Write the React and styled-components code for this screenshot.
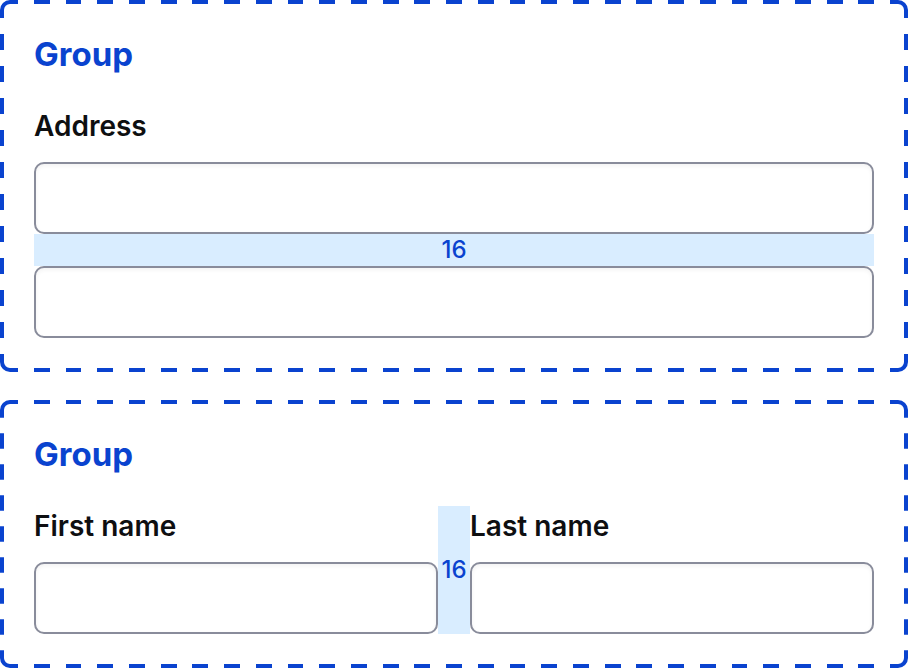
import React from "react";
import styled, { createGlobalStyle } from "styled-components";

const blue = "#0a43cf";

// One dashed tile per edge, with a rounded piece for each corner.
const dashedFrame = encodeURIComponent(
  `<svg xmlns="http://www.w3.org/2000/svg" width="52" height="52" viewBox="0 0 52 52" fill="none" stroke="${blue}" stroke-width="4">` +
    `<path d="M2 18V10A8 8 0 0 1 10 2H18M34 2H42A8 8 0 0 1 50 10V18M50 34V42A8 8 0 0 1 42 50H34M18 50H10A8 8 0 0 1 2 42V34"/>` +
    `</svg>`
);

const GlobalStyle = createGlobalStyle`
  *, *::before, *::after {
    box-sizing: border-box;
  }

  body {
    margin: 0;
    background: #ffffff;
    color: #0e0f11;
    font-family: Inter, "Liberation Sans", sans-serif;
  }
`;

const Page = styled.main`
  display: grid;
  gap: 28px;
`;

const Group = styled.section`
  display: flex;
  flex-direction: column;
  padding: 34px;
  border: 0 solid transparent;
  border-image: url("data:image/svg+xml,${dashedFrame}") 10 / 10px / 0 round;
`;

const GroupTitle = styled.h2`
  margin: 0 0 32px;
  color: ${blue};
  font-size: 33px;
  font-weight: 700;
  line-height: 40px;
`;

const Fields = styled.div`
  display: flex;
  flex-direction: ${({ $inline }) => ($inline ? "row" : "column")};
`;

const Field = styled.div`
  display: flex;
  flex: 1 1 0;
  flex-direction: column;
  min-width: 0;
`;

const Label = styled.label`
  margin-bottom: 16px;
  font-size: 28px;
  font-weight: 600;
  line-height: 40px;
`;

const TextInput = styled.input`
  width: 100%;
  height: 72px;
  margin: 0;
  padding: 0 16px;
  border: 2px solid #898c9b;
  border-radius: 10px;
  background: #ffffff;
  box-shadow: inset 0 2px 4px rgba(0, 0, 0, 0.05);
  color: inherit;
  font: inherit;
  font-size: 28px;
`;

const Spacer = styled.div`
  display: flex;
  flex: 0 0 32px;
  align-items: center;
  justify-content: center;
  background: #d9edff;
  color: ${blue};
  font-size: 24px;
  font-weight: 500;
  line-height: 32px;
`;

export default function App() {
  return (
    <>
      <GlobalStyle />
      <Page>
        <Group aria-labelledby="address-group">
          <GroupTitle id="address-group">Group</GroupTitle>
          <Fields>
            <Field>
              <Label htmlFor="address-1">Address</Label>
              <TextInput id="address-1" type="text" />
            </Field>
            <Spacer>16</Spacer>
            <TextInput type="text" aria-label="Address line 2" />
          </Fields>
        </Group>
        <Group aria-labelledby="name-group">
          <GroupTitle id="name-group">Group</GroupTitle>
          <Fields $inline>
            <Field>
              <Label htmlFor="first-name">First name</Label>
              <TextInput id="first-name" type="text" />
            </Field>
            <Spacer>16</Spacer>
            <Field>
              <Label htmlFor="last-name">Last name</Label>
              <TextInput id="last-name" type="text" />
            </Field>
          </Fields>
        </Group>
      </Page>
    </>
  );
}
